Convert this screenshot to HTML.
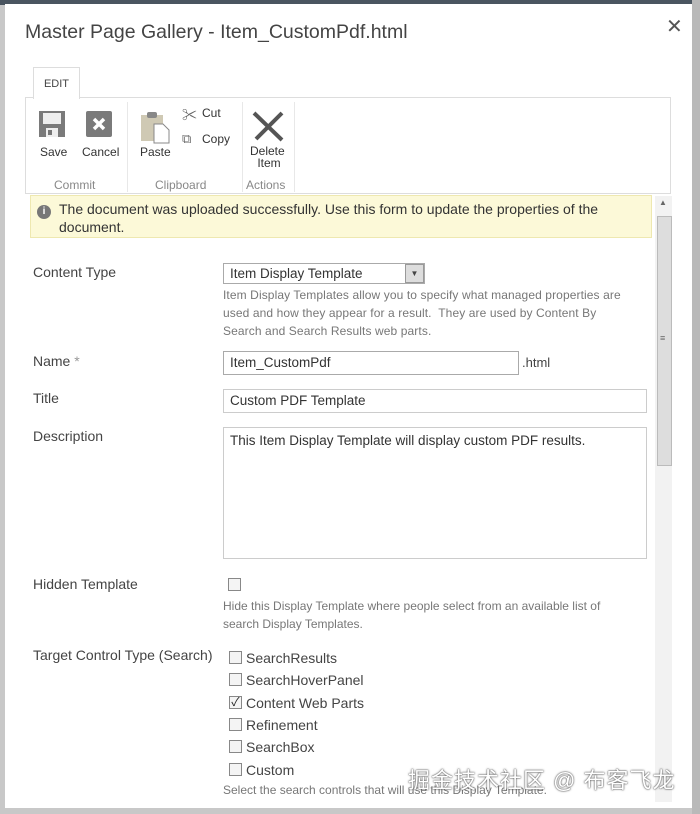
<!DOCTYPE html>
<html><head><meta charset="utf-8"><style>
*{box-sizing:border-box;margin:0;padding:0}
body{width:700px;height:814px;background:#c8c8c8;position:relative;overflow:hidden;font-family:"Liberation Sans","Noto Sans CJK SC",sans-serif;color:#444;font-size:13px}
.topbar{position:absolute;left:0;top:0;width:700px;height:5px;background:#4a5560}
.dlg{position:absolute;left:5px;top:4px;width:687px;height:804px;background:#fff}
.rs{position:absolute;right:0;top:0;width:8px;height:814px;background:#b9b9b9}
.a{position:absolute;white-space:nowrap}
.title{left:25px;top:21px;font-size:19.5px;color:#444}
.close{left:666px;top:14px;font-size:20px;color:#555}
.tab{left:33px;top:67px;width:47px;height:32px;border:1px solid #ddd;border-bottom:none;background:#fff;font-size:11px;color:#444;text-align:center;line-height:32px}
.ribbon{left:25px;top:97px;width:646px;height:97px;border:1px solid #ddd}
.lbl{font-size:12px;color:#333}
.grp{font-size:12px;color:#888}
.sep{position:absolute;top:102px;width:1px;height:90px;background:#e8e8e8}
.msg{left:30px;top:195px;width:622px;height:43px;background:#fcf9d8;border:1px solid #eee8b0;color:#333;font-size:14px;line-height:18px;padding:4px 40px 0 28px;white-space:normal}
.info{position:absolute;left:6px;top:9px;width:14px;height:14px;border-radius:50%;background:#777;color:#fff;font-size:10px;text-align:center;line-height:14px;font-weight:bold}
.sb{left:655px;top:196px;width:17px;height:606px;background:#f2f2f2}
.thumb{left:657px;top:216px;width:15px;height:250px;background:#ddd;border:1px solid #bbb}
.f{font-size:14px;color:#444}
.box{border:1px solid #aaa;background:#fff;font-size:13.5px;color:#333;padding-left:6px}
.hint{font-size:12px;color:#777;line-height:18px;white-space:normal}
.cb{position:absolute;width:13px;height:13px;border:1px solid #888;background:#f4f4f4}
</style></head><body>
<div class="topbar"></div>
<div class="rs"></div>
<div class="dlg"></div>
<div class="a title">Master Page Gallery - Item_CustomPdf.html</div>
<div class="a close">✕</div>
<div class="a ribbon"></div>
<div class="a tab">EDIT</div>
<div class="sep" style="left:127px"></div><div class="sep" style="left:242px"></div><div class="sep" style="left:294px"></div>
<svg class="a" style="left:38px;top:110px" width="28" height="28" viewBox="0 0 28 28"><rect x="1" y="1" width="26" height="26" fill="#7a7a7a"/><rect x="5" y="3" width="18" height="11" fill="#eee"/><rect x="8" y="18" width="12" height="9" fill="#eee"/><rect x="10" y="20" width="4" height="5" fill="#777"/></svg>
<svg class="a" style="left:86px;top:111px" width="26" height="26" viewBox="0 0 26 26"><rect width="26" height="26" rx="2" fill="#7a7a7a"/><path d="M8 8L18 18M18 8L8 18" stroke="#fff" stroke-width="3.5"/></svg>
<div class="a lbl" style="left:40px;top:145px">Save</div>
<div class="a lbl" style="left:82px;top:145px">Cancel</div>
<div class="a grp" style="left:54px;top:178px">Commit</div>
<svg class="a" style="left:140px;top:110px" width="32" height="34" viewBox="0 0 32 34"><rect x="1" y="5" width="22" height="26" fill="#cfc9b4"/><rect x="7" y="2" width="10" height="6" rx="2" fill="#888"/><path d="M14 14h9l6 6v13H14z" fill="#fff" stroke="#888"/></svg>
<div class="a lbl" style="left:140px;top:145px">Paste</div>
<div class="a" style="left:182px;top:104px;font-size:15px;color:#666">✂</div>
<div class="a lbl" style="left:202px;top:106px">Cut</div>
<div class="a" style="left:182px;top:131px;font-size:13px;color:#666">⧉</div>
<div class="a lbl" style="left:202px;top:132px">Copy</div>
<div class="a grp" style="left:155px;top:178px">Clipboard</div>
<svg class="a" style="left:251px;top:110px" width="34" height="32" viewBox="0 0 34 32"><path d="M3 3L31 30M31 3L5 29" stroke="#555" stroke-width="4"/></svg>
<div class="a lbl" style="left:250px;top:145px;text-align:center;line-height:12px">Delete<br>&nbsp;Item</div>
<div class="a grp" style="left:246px;top:178px">Actions</div>
<div class="a msg"><span class="info">i</span>The document was uploaded successfully. Use this form to update the properties of the document.</div>
<div class="a sb"></div><div class="a thumb"></div>
<div class="a" style="left:659px;top:198px;font-size:8px;color:#666">▲</div>
<div class="a" style="left:660px;top:333px;font-size:9px;color:#666">≡</div>
<div class="a f" style="left:33px;top:264px">Content Type</div>
<div class="a box" style="left:223px;top:263px;width:202px;height:21px;line-height:19px">Item Display Template</div>
<div class="a" style="left:405px;top:264px;width:19px;height:19px;background:#ddd;border:1px solid #999;font-size:8px;text-align:center;line-height:17px">▼</div>
<div class="a hint" style="left:223px;top:286px;width:412px;letter-spacing:0.1px">Item Display Templates allow you to specify what managed properties are used and how they appear for a result.&nbsp; They are used by Content By Search and Search Results web parts.</div>
<div class="a f" style="left:33px;top:353px">Name <span style="color:#999">*</span></div>
<div class="a box" style="left:223px;top:351px;width:296px;height:24px;line-height:22px">Item_CustomPdf</div>
<div class="a" style="left:522px;top:355px;font-size:13px;color:#444">.html</div>
<div class="a f" style="left:33px;top:390px">Title</div>
<div class="a box" style="left:223px;top:389px;width:424px;height:24px;line-height:22px;border-color:#ccc">Custom PDF Template</div>
<div class="a f" style="left:33px;top:428px">Description</div>
<div class="a box" style="left:223px;top:427px;width:424px;height:132px;padding-top:5px;border-color:#ccc">This Item Display Template will display custom PDF results.</div>
<div class="a f" style="left:33px;top:576px">Hidden Template</div>
<div class="cb" style="left:228px;top:578px"></div>
<div class="a hint" style="left:223px;top:597px;width:405px">Hide this Display Template where people select from an available list of search Display Templates.</div>
<div class="a f" style="left:33px;top:647px">Target Control Type (Search)</div>
<div class="cb" style="left:229px;top:651px"></div><div class="a f" style="left:246px;top:650px">SearchResults</div>
<div class="cb" style="left:229px;top:673px"></div><div class="a f" style="left:246px;top:672px">SearchHoverPanel</div>
<div class="cb" style="left:229px;top:696px;font-size:12px;line-height:11px;text-align:center;color:#222">✓</div><div class="a f" style="left:246px;top:695px">Content Web Parts</div>
<div class="cb" style="left:229px;top:718px"></div><div class="a f" style="left:246px;top:717px">Refinement</div>
<div class="cb" style="left:229px;top:740px"></div><div class="a f" style="left:246px;top:739px">SearchBox</div>
<div class="cb" style="left:229px;top:763px"></div><div class="a f" style="left:246px;top:762px">Custom</div>
<div class="a hint" style="left:223px;top:781px">Select the search controls that will use this Display Template.</div>
<div class="a" style="left:408px;top:763px;font-size:22px;letter-spacing:1px;color:#fff;text-shadow:0 0 2px #555,0 0 1px #333">掘金技术社区 @ 布客飞龙</div>
</body></html>
